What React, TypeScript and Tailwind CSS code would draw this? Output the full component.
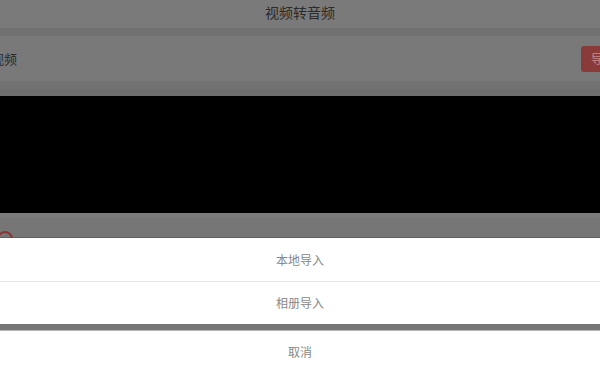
import React from "react";

export default function App() {
  const font = { fontFamily: '"Noto Sans CJK SC", "Noto Sans", sans-serif' };
  return (
    <div className="relative w-[600px] h-[373px] overflow-hidden bg-[#767676]" style={font}>
      {/* underlying page (dimmed) */}
      <div className="flex flex-col">
        <div className="h-[28px] bg-[#7a7a7a] flex items-start justify-center pt-[2px] text-[14px] text-[#2a2a2a]">
          视频转音频
        </div>
        <div className="h-[8px] bg-[#717171]" />
        <div className="h-[45px] bg-[#797979] flex items-center justify-between">
          <span className="text-[13px] text-[#2a2a2a] -ml-[9px]">视频</span>
          <div className="w-[30px] h-[26px] -mr-[11px] rounded-[3px] bg-[#8b3a3a] flex items-center pl-[10px] text-[12px] text-[#c98a8a]">
            导
          </div>
        </div>
        <div className="h-[8px] bg-[#727272]" />
        <div className="h-[7px] bg-[#6e6e6e]" />
        <div className="h-[117px] bg-black" />
        <div className="h-[5px] bg-[#7b7b7b]" />
        <div className="h-[19px] bg-[#767676] relative">
          <div className="absolute -left-[3px] top-[13px] w-[16px] h-[16px] rounded-full border-2 border-[#8b3434]" />
        </div>
        <div className="h-[1px] bg-[#5f5f5f]" />
        <div className="flex-1 relative">
          <span className="absolute right-[-4px] top-[74px] text-[12px] text-[#3a3a3a]">mp3</span>
        </div>
      </div>

      {/* action sheet */}
      <div className="absolute left-0 right-0 bottom-0 flex flex-col text-[12px] text-[#888888]">
        <div className="h-[43px] bg-white flex items-center justify-center">本地导入</div>
        <div className="h-[1px] bg-[#e8e8e8]" />
        <div className="h-[42px] bg-white flex items-center justify-center">相册导入</div>
        <div className="h-[6px] bg-[#767676]" />
        <div className="h-[1px] bg-[#b5b5b5]" />
        <div className="h-[42px] bg-white flex items-center justify-center">取消</div>
      </div>
    </div>
  );
}
